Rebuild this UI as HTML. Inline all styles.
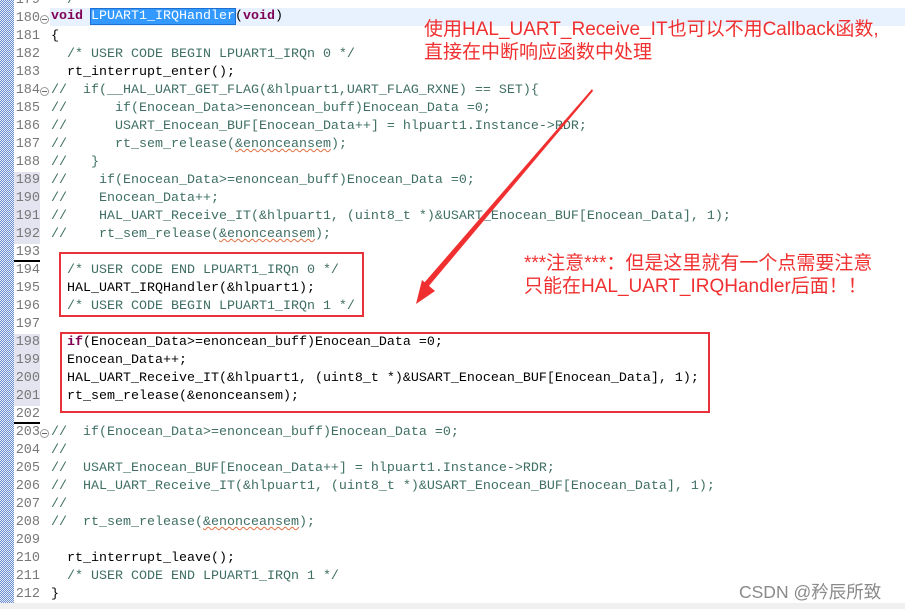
<!DOCTYPE html>
<html><head><meta charset="utf-8"><style>
body{margin:0;width:905px;height:609px;overflow:hidden;background:#fff;position:relative;font-family:"Liberation Mono",monospace;}
.ruler{position:absolute;left:0;top:0;width:14px;height:609px;background:repeating-conic-gradient(#6b8fd0 0 25%,#e6edf8 0 50%) 0 0/2px 2px;}
.ln{position:absolute;left:14px;width:26px;text-align:right;font-size:13.5px;color:#787878;height:18px;line-height:18px;}
.ln.p{background:#e4e4f0;}
.ln.u{border-bottom:2px solid #000;height:16px;}
.c{position:absolute;left:51px;font-size:13.33px;line-height:18px;height:18px;white-space:pre;color:#000;}
.cm{color:#3f6f64;}
.kw{color:#7f0055;font-weight:bold;}
.fold{position:absolute;left:40px;width:7px;height:7px;border:1px solid #999;border-radius:50%;font-size:0}
.fold:after{content:"";position:absolute;left:1px;top:3px;width:5px;height:1px;background:#666}
.sq{text-decoration:underline wavy #e07040;text-decoration-thickness:1px;}
.box{position:absolute;border:2px solid #e8313a;}
.note{position:absolute;color:#f03030;font-family:"Liberation Sans","Noto Sans CJK SC",sans-serif;font-size:19px;line-height:23px;white-space:nowrap;}
.sh{position:absolute;left:0;top:2px;width:905px;height:609px;}
</style></head><body>
<div class="ruler"></div>
<div style="position:absolute;left:50px;top:8px;width:855px;height:18px;background:#e8f2fe"></div>
<div style="position:absolute;left:0;top:603px;width:905px;height:6px;background:#f0f0f0"></div>
<div class="sh">
<div class="ln" style="top:-10px">179</div>
<div class="ln" style="top:8px">180</div><div class="fold" style="top:13px"></div>
<div class="ln" style="top:26px">181</div>
<div class="ln" style="top:44px">182</div>
<div class="ln" style="top:62px">183</div>
<div class="ln" style="top:80px">184</div><div class="fold" style="top:85px"></div>
<div class="ln" style="top:98px">185</div>
<div class="ln" style="top:116px">186</div>
<div class="ln" style="top:134px">187</div>
<div class="ln" style="top:152px">188</div>
<div class="ln p" style="top:170px">189</div>
<div class="ln p" style="top:188px">190</div>
<div class="ln p" style="top:206px">191</div>
<div class="ln p" style="top:224px">192</div>
<div class="ln u" style="top:242px">193</div>
<div class="ln" style="top:260px">194</div>
<div class="ln" style="top:278px">195</div>
<div class="ln" style="top:296px">196</div>
<div class="ln" style="top:314px">197</div>
<div class="ln p" style="top:332px">198</div>
<div class="ln p" style="top:350px">199</div>
<div class="ln p" style="top:368px">200</div>
<div class="ln p" style="top:386px">201</div>
<div class="ln u" style="top:404px">202</div>
<div class="ln" style="top:422px">203</div><div class="fold" style="top:427px"></div>
<div class="ln" style="top:440px">204</div>
<div class="ln" style="top:458px">205</div>
<div class="ln" style="top:476px">206</div>
<div class="ln" style="top:494px">207</div>
<div class="ln" style="top:512px">208</div>
<div class="ln" style="top:530px">209</div>
<div class="ln" style="top:548px">210</div>
<div class="ln" style="top:566px">211</div>
<div class="ln" style="top:584px">212</div>

<div class="c cm" style="top:-10px">  /</div>
<div class="c" style="top:6px"><span class="kw">void</span> <span style="background:#3399ff;color:#fff;outline:1px solid #1f6fd0">LPUART1_IRQHandler</span>(<span class="kw">void</span>)</div>
<div class="c" style="top:26px">{</div>
<div class="c cm" style="top:44px">  /* USER CODE BEGIN LPUART1_IRQn 0 */</div>
<div class="c" style="top:62px">  rt_interrupt_enter();</div>
<div class="c cm" style="top:80px">//  if(__HAL_UART_GET_FLAG(&amp;hlpuart1,UART_FLAG_RXNE) == SET){</div>
<div class="c cm" style="top:98px">//      if(Enocean_Data&gt;=enoncean_buff)Enocean_Data =0;</div>
<div class="c cm" style="top:116px">//      USART_Enocean_BUF[Enocean_Data++] = hlpuart1.Instance-&gt;RDR;</div>
<div class="c cm" style="top:134px">//      rt_sem_release(<span class="sq">&amp;enonceansem</span>);</div>
<div class="c cm" style="top:152px">//   }</div>
<div class="c cm" style="top:170px">//    if(Enocean_Data&gt;=enoncean_buff)Enocean_Data =0;</div>
<div class="c cm" style="top:188px">//    Enocean_Data++;</div>
<div class="c cm" style="top:206px">//    HAL_UART_Receive_IT(&amp;hlpuart1, (uint8_t *)&amp;USART_Enocean_BUF[Enocean_Data], 1);</div>
<div class="c cm" style="top:224px">//    rt_sem_release(<span class="sq">&amp;enonceansem</span>);</div>
<div class="c cm" style="top:260px">  /* USER CODE END LPUART1_IRQn 0 */</div>
<div class="c" style="top:278px">  HAL_UART_IRQHandler(&amp;hlpuart1);</div>
<div class="c cm" style="top:296px">  /* USER CODE BEGIN LPUART1_IRQn 1 */</div>
<div class="c" style="top:332px">  <span class="kw">if</span>(Enocean_Data&gt;=enoncean_buff)Enocean_Data =0;</div>
<div class="c" style="top:350px">  Enocean_Data++;</div>
<div class="c" style="top:368px">  HAL_UART_Receive_IT(&amp;hlpuart1, (uint8_t *)&amp;USART_Enocean_BUF[Enocean_Data], 1);</div>
<div class="c" style="top:386px">  rt_sem_release(&amp;enonceansem);</div>
<div class="c cm" style="top:422px">//  if(Enocean_Data&gt;=enoncean_buff)Enocean_Data =0;</div>
<div class="c cm" style="top:440px">//</div>
<div class="c cm" style="top:458px">//  USART_Enocean_BUF[Enocean_Data++] = hlpuart1.Instance-&gt;RDR;</div>
<div class="c cm" style="top:476px">//  HAL_UART_Receive_IT(&amp;hlpuart1, (uint8_t *)&amp;USART_Enocean_BUF[Enocean_Data], 1);</div>
<div class="c cm" style="top:494px">//</div>
<div class="c cm" style="top:512px">//  rt_sem_release(<span class="sq">&amp;enonceansem</span>);</div>
<div class="c" style="top:548px">  rt_interrupt_leave();</div>
<div class="c cm" style="top:566px">  /* USER CODE END LPUART1_IRQn 1 */</div>
<div class="c" style="top:584px">}</div>
</div>

<div class="box" style="left:59px;top:252px;width:301px;height:61px"></div>
<div class="box" style="left:60px;top:332px;width:646px;height:77px"></div>

<svg style="position:absolute;left:0;top:0" width="905" height="609">
<polygon points="592,89 593,91 428,287 424,283" fill="#f03030"/>
<polygon points="416,304 422,280 435,291" fill="#f03030"/>
</svg>

<div class="note" style="left:424px;top:18px">使用HAL_UART_Receive_IT也可以不用Callback函数,<br>直接在中断响应函数中处理</div>
<div class="note" style="left:524px;top:252px">***注意***：但是这里就有一个点需要注意<br>只能在HAL_UART_IRQHandler后面！！</div>
<div style="position:absolute;left:739px;top:579px;font-family:'Liberation Sans','Noto Sans CJK SC',sans-serif;font-size:17.5px;color:#8a8a8a">CSDN @矜辰所致</div>
</body></html>
